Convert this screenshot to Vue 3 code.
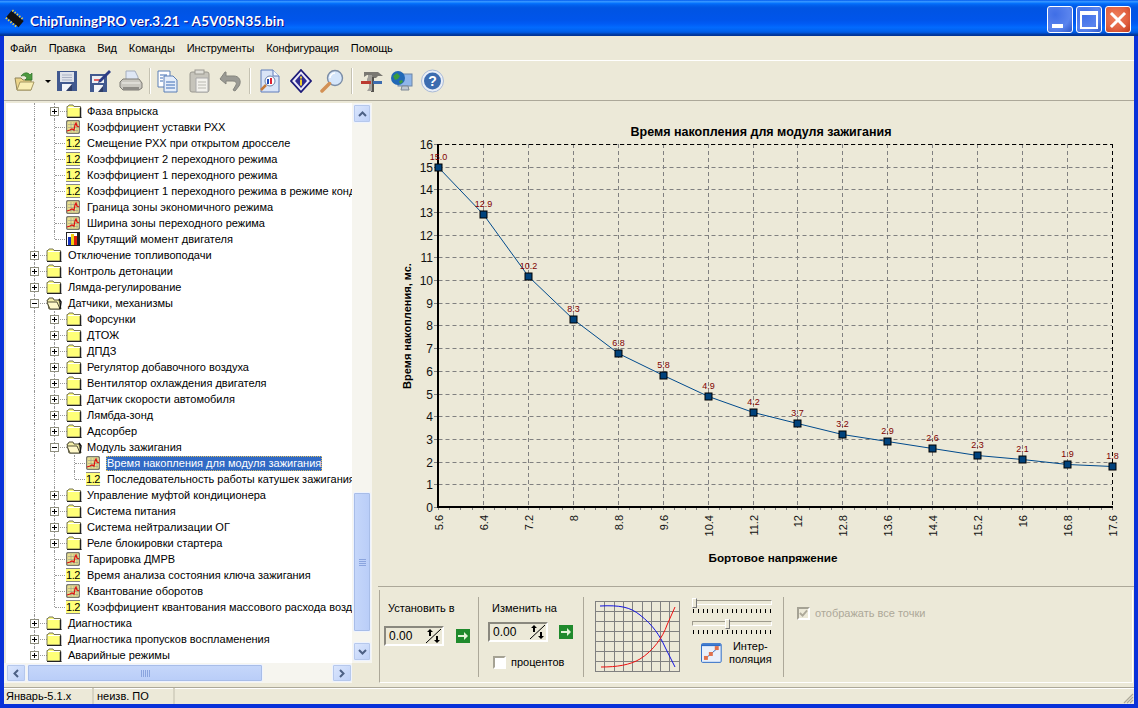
<script setup>
const rows = [
  ['Фаза впрыска', 2, 'folder', '+', [1, 2]],
  ['Коэффициент уставки РХХ', 2, 'chart', '', [1, 2]],
  ['Смещение РХХ при открытом дросселе', 2, 'num', '', [1, 2]],
  ['Коэффициент 2 переходного режима', 2, 'num', '', [1, 2]],
  ['Коэффициент 1 переходного режима', 2, 'num', '', [1, 2]],
  ['Коэффициент 1 переходного режима в режиме кондиционера', 2, 'num', '', [1, 2]],
  ['Граница зоны экономичного режима', 2, 'chart', '', [1, 2]],
  ['Ширина зоны переходного режима', 2, 'chart', '', [1, 2]],
  ['Крутящий момент двигателя', 2, 'bars', '', [1, 'e2']],
  ['Отключение топливоподачи', 1, 'folder', '+', [1]],
  ['Контроль детонации', 1, 'folder', '+', [1]],
  ['Лямда-регулирование', 1, 'folder', '+', [1]],
  ['Датчики, механизмы', 1, 'open', '-', [1]],
  ['Форсунки', 2, 'folder', '+', [1, 2]],
  ['ДТОЖ', 2, 'folder', '+', [1, 2]],
  ['ДПДЗ', 2, 'folder', '+', [1, 2]],
  ['Регулятор добавочного воздуха', 2, 'folder', '+', [1, 2]],
  ['Вентилятор охлаждения двигателя', 2, 'folder', '+', [1, 2]],
  ['Датчик скорости автомобиля', 2, 'folder', '+', [1, 2]],
  ['Лямбда-зонд', 2, 'folder', '+', [1, 2]],
  ['Адсорбер', 2, 'folder', '+', [1, 2]],
  ['Модуль зажигания', 2, 'open', '-', [1, 2]],
  ['Время накопления для модуля зажигания', 3, 'chart', '', [1, 2, 3], true],
  ['Последовательность работы катушек зажигания', 3, 'num', '', [1, 2, 'e3']],
  ['Управление муфтой кондиционера', 2, 'folder', '+', [1, 2]],
  ['Система питания', 2, 'folder', '+', [1, 2]],
  ['Система нейтрализации ОГ', 2, 'folder', '+', [1, 2]],
  ['Реле блокировки стартера', 2, 'folder', '+', [1, 2]],
  ['Тарировка ДМРВ', 2, 'chart', '', [1, 2]],
  ['Время анализа состояния ключа зажигания', 2, 'num', '', [1, 2]],
  ['Квантование оборотов', 2, 'chart', '', [1, 2]],
  ['Коэффициент квантования массового расхода воздуха', 2, 'num', '', [1, 'e2']],
  ['Диагностика', 1, 'folder', '+', [1]],
  ['Диагностика пропусков воспламенения', 1, 'folder', '+', [1]],
  ['Аварийные режимы', 1, 'folder', '+', ['e1']],
].map(([text, level, icon, exp, guides, sel], id) => ({ id, text, level, icon, exp, guides, sel }))

const menu = ['Файл', 'Правка', 'Вид', 'Команды', 'Инструменты', 'Конфигурация', 'Помощь']

const xLabels = ['5.6', '6.4', '7.2', '8', '8.8', '9.6', '10.4', '11.2', '12', '12.8', '13.6', '14.4', '15.2', '16', '16.8', '17.6']
const values = [15.0, 12.9, 10.2, 8.3, 6.8, 5.8, 4.9, 4.2, 3.7, 3.2, 2.9, 2.6, 2.3, 2.1, 1.9, 1.8]
const px = (i) => Math.round(438 + i * 44.93) + 0.5
const py = (v) => Math.round(507 - v * 22.69) + 0.5
const points = values.map((v, i) => ({ x: px(i), y: py(v), label: v.toFixed(1) }))
const line = points.map((p) => `${p.x},${p.y}`).join(' ')
const yTicks = Array.from({ length: 17 }, (_, i) => i)
const minor = Array.from({ length: 61 }, (_, i) => Math.round(438 + (i * 44.93) / 4) + 0.5)
const gridX = [...Array(10).keys()]
const gridY = [...Array(8).keys()]
const sliderTicks = Array.from({ length: 17 }, (_, i) => i * 4.9)
</script>

<template>
  <div class="window">
    <header class="titlebar">
      <svg class="app-icon" width="20" height="20" viewBox="0 0 20 20">
        <g transform="rotate(40 10 10)">
          <rect x="2" y="6" width="16" height="8" fill="#111" />
          <path d="M3 6V4M6 6V4M9 6V4M12 6V4M15 6V4M3 14v2M6 14v2M9 14v2M12 14v2M15 14v2" stroke="#e8d040" stroke-width="1.4" />
        </g>
      </svg>
      <span class="title-text">ChipTuningPRO ver.3.21 - A5V05N35.bin</span>
      <div class="caption-buttons">
        <button class="cap"><i class="min-glyph"></i></button>
        <button class="cap"><i class="max-glyph"></i></button>
        <button class="cap close">
          <svg width="18" height="18" viewBox="0 0 18 18"><path d="M3 3l12 12M15 3L3 15" stroke="#fff" stroke-width="3" stroke-linecap="square" /></svg>
        </button>
      </div>
    </header>

    <div class="body">
      <nav class="menubar">
        <span v-for="m in menu" :key="m" class="menu-item">{{ m }}</span>
      </nav>

      <div class="toolbar">
        <svg class="t tb-open" width="24" height="24" viewBox="0 0 24 24">
          <path d="M2 9h6l2 2h8v10H4z" fill="#ecd58a" stroke="#8f8358" />
          <path d="M4 21l3-8h14l-3 8z" fill="#f9eeb4" stroke="#a59763" />
          <path d="M8 7c3-4 7-4 9-1l2-2v7h-7l2-2c-1-2-3-3-6-2z" fill="#4d9a3f" stroke="#2b7028" stroke-width=".7" />
        </svg>
        <svg class="t tb-drop" width="8" height="24" viewBox="0 0 8 24"><path d="M1 11h6l-3 3z" fill="#000" /></svg>
        <svg class="t tb-save" width="24" height="24" viewBox="0 0 24 24">
          <path d="M2 2h20v20H2z" fill="#41598f" />
          <rect x="5" y="3" width="14" height="10" fill="#dfe3ea" />
          <path d="M7 6h10M7 8.500h10M7 11h10" stroke="#a9b1c4" />
          <rect x="7" y="15" width="10" height="7" fill="#f2f4f8" /><path d="M11 22l6-7v7z" fill="#2f3d66" />
        </svg>
        <svg class="t tb-saveas" width="22" height="24" viewBox="0 0 22 24">
          <path d="M1 5h17v18H1z" fill="#41598f" />
          <rect x="3" y="7" width="12" height="7" fill="#eceef2" />
          <path d="M5 11h7" stroke="#d33" stroke-width="1.500" />
          <rect x="5" y="16" width="9" height="7" fill="#f2f4f8" /><path d="M9 23l5-6v6z" fill="#2f3d66" />
          <path d="M10 11L20 1l2 2-10 10-3 1z" fill="#2c3c86" />
        </svg>
        <svg class="t tb-print" width="24" height="24" viewBox="0 0 24 24">
          <path d="M7 2h9l3 6v4H7z" fill="#dfe7f4" stroke="#a5aebd" />
          <path d="M1 13l3-3h16l3 4v5l-3 2H4l-3-3z" fill="#c9c7c0" stroke="#7d7b74" />
          <path d="M4 18h16v3H4z" fill="#8d8b86" /><path d="M3 14h18" stroke="#f2f1ec" />
        </svg>
        <i class="sep sep1"></i>
        <svg class="t tb-copy" width="22" height="24" viewBox="0 0 22 24">
          <path d="M1 2h12v16H1z" fill="#fff" stroke="#5b7fb5" />
          <path d="M7 7h9l4 4v12H7z" fill="#e4edfa" stroke="#5b7fb5" />
          <path d="M3 6h7M3 9h3M3 12h3M9 13h9M9 16h9M9 19h9" stroke="#3d6cb5" />
        </svg>
        <svg class="t tb-paste" width="21" height="24" viewBox="0 0 21 24">
          <rect x="1" y="3" width="19" height="20" rx="2" fill="#c6c4bb" stroke="#9a9890" />
          <rect x="6" y="1" width="9" height="4" fill="#e0dfd8" stroke="#9a9890" />
          <path d="M7 9h12v14H7z" fill="#f2f1ec" stroke="#aaa" /><path d="M9 13h8M9 16h8M9 19h8" stroke="#b9b8b1" />
        </svg>
        <svg class="t tb-undo" width="24" height="24" viewBox="0 0 24 24">
          <path d="M7 3L2 10l6 5v-3h7c3 0 4 2 3 4l-3 5 2 1 4-5c3-5 0-10-5-10H8V3z" fill="#9a9a94" stroke="#85857e" />
        </svg>
        <i class="sep sep2"></i>
        <svg class="t tb-doc" width="20" height="24" viewBox="0 0 20 24">
          <path d="M1 1h12l6 6v16H1z" fill="#d9e4f7" stroke="#5e7dbb" /><path d="M13 1v6h6" fill="#f4f7fd" stroke="#5e7dbb" />
          <circle cx="10" cy="12" r="5" fill="#fff" stroke="#6a80a8" /><path d="M8 10v5" stroke="#1c46b8" stroke-width="2" /><path d="M11 9v6" stroke="#d23" stroke-width="2" />
          <path d="M6 16l-5 5" stroke="#c47a3c" stroke-width="2.500" />
        </svg>
        <svg class="t tb-info" width="22" height="24" viewBox="0 0 22 24">
          <path d="M11 1l10 11-10 11L1 12z" fill="#ece9f8" stroke="#1c1a78" stroke-width="1.800" />
          <path d="M11 5l6 7-6 7-6-7z" fill="#2f2b90" />
          <rect x="10" y="7.500" width="2" height="2" fill="#f0d030" /><rect x="10" y="10.500" width="2" height="6" fill="#f0d030" />
        </svg>
        <svg class="t tb-find" width="24" height="24" viewBox="0 0 24 24">
          <circle cx="15" cy="9" r="7.500" fill="#d5e6fb" stroke="#7b8da6" stroke-width="1.400" />
          <path d="M10 9a5 5 0 0 1 5-5" stroke="#fff" stroke-width="1.500" fill="none" />
          <path d="M9.500 14.500L2 22" stroke="#d39155" stroke-width="3.500" stroke-linecap="round" />
        </svg>
        <i class="sep sep3"></i>
        <svg class="t tb-tools" width="24" height="24" viewBox="0 0 24 24">
          <path d="M4 3h14l5 4h-5l-2 2h-3L11 6H7L4 8z" fill="#7a7872" />
          <rect x="11" y="8" width="3" height="15" fill="#55534e" />
          <path d="M8 6v2l-1 2v3l2 2v4l-2 3h5V6z" fill="#a2a09a" />
          <rect x="13" y="12" width="9" height="3" fill="#3c6cb0" /><path d="M1 12h10v3H1z" fill="#bb3a30" />
        </svg>
        <svg class="t tb-net" width="24" height="24" viewBox="0 0 24 24">
          <rect x="8" y="5" width="14" height="12" fill="#8fb6ea" stroke="#6c86a6" />
          <path d="M12 17h6l1 4H11z" fill="#bfc8d2" stroke="#7c8894" />
          <circle cx="8" cy="9" r="7" fill="#2168b6" /><path d="M3 7l4-3 3 3-2 3-3 1zM9 12l3-1 1 2-3 2z" fill="#3c9c3c" />
        </svg>
        <svg class="t tb-help" width="23" height="24" viewBox="0 0 23 24">
          <circle cx="11.500" cy="12" r="11" fill="#e9eef7" stroke="#a9bad6" />
          <circle cx="11.500" cy="12" r="8.500" fill="#3c6cb0" />
          <text x="11.500" y="17" text-anchor="middle" class="help-q">?</text>
        </svg>
      </div>

      <main class="workspace">
        <section class="tree-pane">
          <div class="tree-top">
            <div class="tree">
              <div v-for="r in rows" :key="r.id" class="row">
                <i v-for="g in r.guides" :key="g" class="guide" :class="'g' + g"></i>
                <i class="branch" :class="'b' + r.level"></i>
                <span v-if="r.exp" class="expander" :class="'x' + r.level">
                  <i class="h"></i><i v-if="r.exp === '+'" class="v"></i>
                </span>
                <div class="row-content" :class="'l' + r.level">
                  <svg v-if="r.icon === 'folder'" class="ico" width="16" height="14" viewBox="0 0 16 14">
                    <path d="M1 2.500h1l1-1.500h4l1 1.500h6.500V13H1z" fill="#ffff78" stroke="#77745a" />
                    <path d="M14.500 3.500V14" stroke="#222" stroke-width="1.500" />
                    <path d="M2 3.500h12" stroke="#fff" />
                    <path d="M1 13.500h14.500" stroke="#222" />
                  </svg>
                  <svg v-else-if="r.icon === 'open'" class="ico" width="16" height="14" viewBox="0 0 16 14">
                    <path d="M1 4h1l1-2h4l1 2h5l2 9H3z" fill="#f3eea8" stroke="#55523a" />
                    <path d="M1 6h10l3 7H4z" fill="#fff9c9" stroke="#55523a" />
                    <path d="M13 3l2 3-1 7" stroke="#111" stroke-width="1.500" fill="none" />
                  </svg>
                  <svg v-else-if="r.icon === 'chart'" class="ico" width="14" height="14" viewBox="0 0 14 14">
                    <rect x=".5" y=".5" width="13" height="13" rx="2" fill="#e9e08f" stroke="#7a7a70" stroke-width="1.400" />
                    <path d="M2 4.500h10M2 7.500h10M2 10.500h10M5 2v10M8 2v10M11 2v10" stroke="#9b9b8a" stroke-width=".6" />
                    <path d="M1 11l3-1 2-1 2 1 1-5 1-2 1 3 2 1" stroke="#dd1010" stroke-width="1.200" fill="none" />
                  </svg>
                  <span v-else-if="r.icon === 'num'" class="num-ico">1.2</span>
                  <svg v-else class="ico" width="14" height="14" viewBox="0 0 14 14">
                    <rect x=".5" y=".5" width="13" height="13" fill="#fff" stroke="#222" />
                    <rect x="2" y="5" width="3" height="8" fill="#1230c0" /><rect x="5" y="2" width="3" height="11" fill="#f0d010" /><rect x="8" y="4" width="3" height="9" fill="#dd2010" />
                    <rect x="11" y="0" width="2" height="13" fill="#222" />
                  </svg>
                  <span class="label" :class="{ selected: r.sel }">{{ r.text }}</span>
                </div>
              </div>
            </div>
            <div class="vscroll">
              <span class="sb-btn"><svg width="9" height="6" viewBox="0 0 9 6"><path d="M1 5l3.500-3.500L8 5" fill="none" stroke="#4d6185" stroke-width="2" /></svg></span>
              <div class="vtrack-a"></div>
              <div class="vthumb"><i></i><i></i><i></i><i></i></div>
              <div class="vtrack-b"></div>
              <span class="sb-btn"><svg width="9" height="6" viewBox="0 0 9 6"><path d="M1 1l3.500 3.500L8 1" fill="none" stroke="#4d6185" stroke-width="2" /></svg></span>
            </div>
          </div>
          <div class="hscroll-row">
            <div class="hscroll">
              <span class="sb-btn"><svg width="6" height="9" viewBox="0 0 6 9"><path d="M5 1L1.500 4.500 5 8" fill="none" stroke="#4d6185" stroke-width="2" /></svg></span>
              <div class="hthumb"><i></i><i></i><i></i><i></i><i></i></div>
              <div class="htrack"></div>
              <span class="sb-btn"><svg width="6" height="9" viewBox="0 0 6 9"><path d="M1 1l3.500 3.500L1 8" fill="none" stroke="#4d6185" stroke-width="2" /></svg></span>
            </div>
            <div class="corner"></div>
          </div>
        </section>

        <section class="right-pane">
          <div class="chart-panel">
            <svg class="chart" width="756" height="484" viewBox="378 102 756 484">
              <text x="761" y="136" text-anchor="middle" class="bold title-b">Время накопления для модуля зажигания</text>
              <text x="773" y="562" text-anchor="middle" class="bold x-b">Бортовое напряжение</text>
              <text class="bold" text-anchor="middle" transform="translate(411 326) rotate(-90)">Время накопления, мс.</text>

              <line v-for="i in yTicks" :key="'gy' + i" x1="438.500" x2="1112" :y1="py(i)" :y2="py(i)" class="grid" />
              <line v-for="(l, i) in xLabels" :key="'gx' + i" :x1="px(i)" :x2="px(i)" y1="144" y2="507" class="grid" />

              <line x1="438" x2="1112" y1="144.500" y2="144.500" class="frame" />
              <line x1="1112.500" x2="1112.500" y1="144" y2="507" class="frame" />
              <line v-for="x in minor" :key="'mx' + x" :x1="x" :x2="x" y1="507" y2="510" class="tick" />
              <line v-for="i in yTicks" :key="'ty' + i" x1="434" x2="438" :y1="py(i)" :y2="py(i)" class="tick" />
              <line x1="438" x2="438" y1="144" y2="508" class="axis" />
              <line x1="437" x2="1113" y1="507" y2="507" class="axis" />

              <text v-for="i in yTicks" :key="'ly' + i" x="433" :y="py(i) + 4" text-anchor="end" class="tlabel">{{ i }}</text>
              <text v-for="(l, i) in xLabels" :key="'lx' + i" class="xlabel" text-anchor="end" :transform="`translate(${px(i) + 4} 515) rotate(-90)`">{{ l }}</text>

              <polyline :points="line" fill="none" stroke="#004a8c" stroke-width="1" />
              <g v-for="p in points" :key="p.x">
                <rect :x="p.x - 3.500" :y="p.y - 3.500" width="7" height="7" fill="#00427c" stroke="#000" />
                <text :x="p.x" :y="p.y - 8" text-anchor="middle" class="plabel">{{ p.label }}</text>
              </g>
            </svg>
          </div>

          <div class="controls">
            <div class="sect s1">
              <div class="cap-label first">Установить в</div>
              <div class="input-row">
                <div class="spin"><span>0.00</span>
                  <svg width="17" height="16" viewBox="0 0 17 16"><rect width="17" height="16" fill="#ece9d8" /><path d="M1 15L16 1" stroke="#000" /><path d="M5 1l3 3H6v4H4V4H2zM12 15l-3-3h2V8h2v4h2z" fill="#000" /></svg>
                </div>
                <svg class="go" width="14" height="14" viewBox="0 0 14 14"><rect width="14" height="14" fill="#1f8a2c" /><path d="M2 6h6V3l4 4-4 4V8H2z" fill="#e3f4d8" /></svg>
              </div>
            </div>
            <div class="sect s2">
              <div class="cap-label second">Изменить на</div>
              <div class="input-row tight">
                <div class="spin"><span>0.00</span>
                  <svg width="17" height="16" viewBox="0 0 17 16"><rect width="17" height="16" fill="#ece9d8" /><path d="M1 15L16 1" stroke="#000" /><path d="M5 1l3 3H6v4H4V4H2zM12 15l-3-3h2V8h2v4h2z" fill="#000" /></svg>
                </div>
                <svg class="go" width="14" height="14" viewBox="0 0 14 14"><rect width="14" height="14" fill="#1f8a2c" /><path d="M2 6h6V3l4 4-4 4V8H2z" fill="#e3f4d8" /></svg>
              </div>
              <label class="check-row"><span class="check"></span>процентов</label>
            </div>
            <div class="sect s3">
              <svg class="curve" width="85" height="71" viewBox="0 0 85 71">
                <rect x=".5" y=".5" width="84" height="70" fill="#ece9d8" stroke="#808080" />
                <path v-for="i in gridX" :key="'a' + i" :d="`M${Math.round(i * 9.3) + 0.5} 0V71`" stroke="#808080" />
                <path v-for="i in gridY" :key="'b' + i" :d="`M0 ${i * 10 + 0.5}H85`" stroke="#808080" />
                <path d="M5 5C25 4 35 6 45 14 58 24 65 35 70 46L80 66" stroke="#1212e0" fill="none" />
                <path d="M6 66C22 66 35 64 45 58 58 50 68 36 72 24L80 6" stroke="#ee1010" fill="none" />
              </svg>
              <div class="interp">
                <div class="slider"><i class="rail"></i><i class="thumb thumb-a"></i></div>
                <div class="ticks"><i v-for="t in sliderTicks" :key="t"></i></div>
                <div class="slider"><i class="rail"></i><i class="thumb thumb-b"></i></div>
                <div class="ticks"><i v-for="t in sliderTicks" :key="t"></i></div>
                <div class="interp-btn">
                  <svg width="21" height="20" viewBox="0 0 21 20">
                    <rect x=".5" y=".5" width="20" height="19" rx="1" fill="#e9f0fb" stroke="#2d6cc8" />
                    <rect x="1" y="1" width="19" height="2" fill="#2d6cc8" />
                    <path d="M4 16L17 5" stroke="#3f6eb8" />
                    <rect x="3" y="13" width="4" height="4" fill="#e0704c" /><rect x="8" y="9" width="4" height="4" fill="#e0704c" /><rect x="14" y="3" width="4" height="4" fill="#e0704c" />
                  </svg>
                  <div class="interp-text">Интер-<br />поляция</div>
                </div>
              </div>
            </div>
            <div class="sect s4">
              <label class="check-row disabled"><span class="check dis">
                <svg width="10" height="10" viewBox="0 0 10 10"><path d="M1 5l3 3 5-6" fill="none" stroke="#aca899" stroke-width="2" /></svg>
              </span>отображать все точки</label>
            </div>
          </div>
        </section>
      </main>

      <footer class="statusbar">
        <span class="st a">Январь-5.1.х</span>
        <span class="st b">неизв. ПО</span>
        <span class="st c">
          <svg width="12" height="12" viewBox="0 0 12 12"><path d="M11 2L2 11M11 5L5 11M11 8L8 11" stroke="#aca899" stroke-width="1.200" /></svg>
        </span>
      </footer>
    </div>
  </div>
</template>

<style>
html, body { margin: 0; background: #ece9d8; }
</style>

<style scoped>
* { box-sizing: border-box; }
.window {
  width: 1138px; height: 708px; display: flex; flex-direction: column; overflow: hidden;
  font: 11px/14px "Liberation Sans", Arial, sans-serif; color: #000;
  background: #0831d9;
}
.titlebar {
  height: 36px; flex: none; display: flex; align-items: center; padding: 0 5px 0 5px;
  background: linear-gradient(180deg,#0058ee 0%,#3593ff 4%,#288eff 6%,#127dff 8%,#036ffc 10%,#0262ee 14%,#0057e5 20%,#0054e3 24%,#0055eb 56%,#005bf5 66%,#026afe 76%,#0062ef 86%,#0052d6 92%,#0040ab 94%,#003092 100%);
}
.app-icon { margin-top: 2px; }
.title-text {
  margin-left: 5px; margin-top: 5px; color: #fff; font: bold 13.5px/16px Lato, sans-serif;
  letter-spacing: .2px; text-shadow: 1px 1px 0 #0f1089;
}
.caption-buttons { margin-left: auto; margin-right: 2px; display: flex; gap: 3px; align-self: flex-start; margin-top: 6px; }
.cap {
  width: 26px; height: 27px; padding: 0; border: 1px solid #fff; border-radius: 3px; display: flex; align-items: center; justify-content: center; position: relative;
  background: radial-gradient(circle at 30% 30%, #3f6ee6, #5a84ee 60%, #2d56c8);
}
.min-glyph { position: absolute; left: 4px; bottom: 4px; width: 11px; height: 4px; background: #fff; }
.max-glyph { width: 18px; height: 18px; border: 2px solid #fff; border-top-width: 4px; }
.cap.close { background: radial-gradient(circle at 40% 40%, #f0805c, #e06040 60%, #c03a1a); }
.body { flex: 1; margin: 0 4px 4px; background: #ece9d8; display: flex; flex-direction: column; min-height: 0; }
.menubar { flex: none; display: flex; align-items: center; border-bottom: 1px solid #fff; height: 25px; letter-spacing: -.1px; }
.menu-item { padding: 0 6px; }
.toolbar { height: 40px; flex: none; display: flex; align-items: center; border-bottom: 1px solid #aca899; }
.t { flex: none; }
.tb-open { margin-left: 9px; }
.tb-drop { margin-left: 7px; }
.tb-save { margin-left: 3px; }
.tb-saveas { margin-left: 10px; }
.tb-print { margin-left: 8px; }
.sep1 { margin-left: 6px; }
.tb-copy { margin-left: 6px; }
.tb-paste { margin-left: 10px; }
.tb-undo { margin-left: 8px; }
.sep2 { margin-left: 7px; }
.tb-doc { margin-left: 9px; }
.tb-info { margin-left: 10px; }
.tb-find { margin-left: 8px; }
.sep3 { margin-left: 7px; }
.tb-tools { margin-left: 7px; }
.tb-net { margin-left: 6px; }
.tb-help { margin-left: 7px; }
.sep { width: 2px; height: 26px; background: #c5c2b2; border-right: 1px solid #fff; flex: none; }
.help-q { font: bold 14px "Liberation Sans", sans-serif; fill: #fff; }

.workspace { flex: 1; min-height: 0; display: flex; padding-top: 1px; }
.tree-pane { width: 368px; flex: none; display: flex; flex-direction: column; margin-top: 1px; }
.tree-top { display: flex; height: 560px; }
.tree { width: 348px; background: linear-gradient(90deg, #ece9d8 2px, #fff 2px); overflow: hidden; flex: none; }
.row { height: 16px; position: relative; white-space: nowrap; }
.guide { position: absolute; top: 0; bottom: 0; width: 0; border-left: 1px dotted #999; }
.g1 { left: 30px; } .g2 { left: 50px; } .g3 { left: 70px; }
.ge1 { left: 30px; bottom: 8px; } .ge2 { left: 50px; bottom: 8px; } .ge3 { left: 70px; bottom: 8px; }
.branch { position: absolute; top: 8px; height: 0; width: 12px; border-top: 1px dotted #999; }
.b1 { left: 31px; } .b2 { left: 51px; } .b3 { left: 71px; }
.expander { position: absolute; top: 4px; width: 9px; height: 9px; border: 1px solid #8f8f7f; background: #fff; }
.x1 { left: 26px; } .x2 { left: 46px; }
.expander .h { position: absolute; left: 1px; top: 3px; width: 5px; height: 1px; background: #000; }
.expander .v { position: absolute; left: 3px; top: 1px; width: 1px; height: 5px; background: #000; }
.row-content { position: absolute; top: 0; height: 16px; display: flex; align-items: center; }
.l1 { left: 42px; } .l2 { left: 62px; } .l3 { left: 82px; }
.ico { flex: none; margin-left: 0; }
.num-ico {
  width: 14px; height: 14px; flex: none; background: #ffff78; border-top: 1px solid #888; border-bottom: 1px solid #888;
  font: 11px/12px "Liberation Sans", sans-serif; letter-spacing: -.5px; text-align: center;
}
.label { position: absolute; left: 20px; padding: 0 1px; line-height: 15px; height: 15px; }
.l1 .label { left: 21px; }
.selected { background: #316ac5; color: #fff; outline: 1px dotted #e0c060; outline-offset: -1px; }

.vscroll { width: 20px; background: #f6f5ef; display: flex; flex-direction: column; align-items: center; padding: 1px 0 2px; }
.sb-btn {
  flex: none; width: 18px; height: 19px; border: 1px solid #eef3fe; border-radius: 2px; display: flex; align-items: center; justify-content: center;
  background: linear-gradient(135deg, #dce7fd, #bdd0f8); box-shadow: 0 0 0 1px #b6c8ec inset;
}
.vtrack-a { height: 369px; flex: none; }
.vthumb {
  width: 18px; height: 140px; flex: none; border: 1px solid #eef3fe; border-radius: 2px; background: linear-gradient(90deg, #c6d7fa, #b9cdf8);
  box-shadow: 0 0 0 1px #a8bde8 inset; display: flex; flex-direction: column; align-items: center; justify-content: center; gap: 1px;
}
.vthumb i { width: 7px; height: 1px; background: #8aa4de; }
.vtrack-b { flex: 1; }
.hscroll-row { display: flex; height: 20px; }
.hscroll { width: 348px; display: flex; align-items: center; background: #f6f5ef; padding-left: 2px; }
.hscroll .sb-btn { width: 20px; height: 18px; }
.hthumb {
  margin-left: 1px; width: 236px; height: 18px; border: 1px solid #eef3fe; border-radius: 2px; background: linear-gradient(#c6d7fa, #b9cdf8);
  box-shadow: 0 0 0 1px #a8bde8 inset; display: flex; align-items: center; justify-content: center; gap: 1px;
}
.hthumb i { width: 1px; height: 7px; background: #8aa4de; }
.htrack { flex: 1; }
.corner { width: 20px; background: #ece9d8; }

.right-pane { margin-left: 6px; width: 756px; flex: none; display: flex; flex-direction: column; }
.chart-panel { height: 485px; flex: none; border-bottom: 1px solid #aca899; }
.chart { display: block; }
.bold { font: bold 11px "Liberation Sans", sans-serif; fill: #000; }
.title-b { font-size: 12.5px; }
.x-b { font-size: 11.7px; }
.grid { stroke: #808080; stroke-width: 1; stroke-dasharray: 4 3; }
.frame { stroke: #000; stroke-width: 1; stroke-dasharray: 4 3; }
.tick { stroke: #808080; stroke-width: 1; }
.axis { stroke: #000; stroke-width: 2; }
.tlabel { font: 12px "Liberation Sans", sans-serif; fill: #111; }
.xlabel { font: 11px "Liberation Sans", sans-serif; fill: #111; }
.plabel { font: 9px "Liberation Sans", sans-serif; fill: #800000; }

.controls {
  height: 93px; margin: 3px 1px 0 1px; display: flex; padding-top: 7px; flex: none;
  border: 1px solid #aca899; border-right-color: #fff; border-bottom-color: #fff; border-top: 0;
}
.sect { height: 80px; border-right: 1px solid #aca899; flex: none; }
.s1 { width: 99px; padding-left: 4px; }
.s2 { width: 105px; padding-left: 9px; }
.s3 { width: 200px; padding-left: 11px; padding-top: 4px; display: flex; }
.s4 { border-right: 0; padding: 9px 0 0 13px; }
.cap-label { margin-top: 4px; height: 14px; }
.cap-label.first { margin-left: 4px; }
.cap-label.second { margin-left: 4px; }
.input-row { display: flex; align-items: center; gap: 12px; margin-top: 11px; }
.input-row.tight { margin-top: 7px; gap: 11px; }
.spin {
  width: 60px; height: 20px; display: flex; align-items: center; justify-content: space-between; padding: 0 0 0 3px;
  border: 2px solid; border-color: #8a887e #fff #fff #8a887e; font: 12px "Liberation Sans", sans-serif;
}
.check-row { display: flex; align-items: center; gap: 5px; margin: 13px 0 0 5px; }
.check { width: 13px; height: 13px; flex: none; border: 2px solid; border-color: #a5a294 #fff #fff #a5a294; background: #fff; display: flex; align-items: center; justify-content: center; }
.check.dis { background: #ece9d8; }
.disabled { margin: 0; color: #aca899; gap: 5px; }
.curve { flex: none; }
.interp { margin-left: 12px; width: 80px; margin-top: -1px; }
.slider { height: 8px; position: relative; }
.rail { position: absolute; left: 0; right: 0; top: 0; height: 5px; border: 1px solid; border-color: #9d9a8c #fff #fff #9d9a8c; background: #ece9d8; }
.thumb { position: absolute; top: -2px; width: 5px; height: 10px; background: #ece9d8; border: 1px solid; border-color: #fff #777 #777 #fff; }
.thumb-a { left: 0; }
.thumb-b { left: 33px; }
.ticks { height: 13px; padding: 1px 1px 0; display: flex; justify-content: space-between; }
.ticks i { width: 1px; height: 4px; background: #000; }
.interp-btn { display: flex; align-items: flex-start; margin: 1px 0 0 9px; }
.interp-text { margin-left: 7px; text-align: center; line-height: 13px; margin-top: -3px; width: 44px; }
.statusbar { height: 17px; flex: none; display: flex; border-top: 1px solid #aca899; box-shadow: 0 1px 0 #fff inset; }
.st { display: flex; align-items: center; border-right: 2px solid #d6d3c2; }
.a { width: 90px; padding-left: 2px; }
.b { width: 81px; padding-left: 3px; }
.c { flex: 1; border: 0; justify-content: flex-end; align-items: flex-end; }
</style>
